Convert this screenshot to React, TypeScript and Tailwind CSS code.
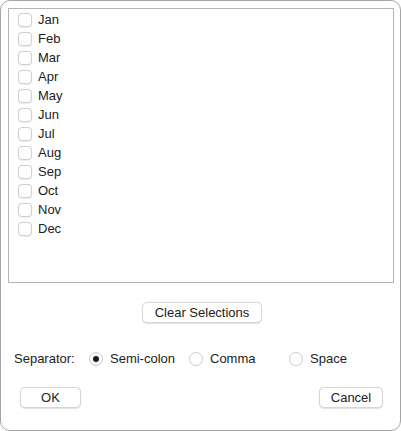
import React, { useState } from "react";

const MONTHS = ["Jan", "Feb", "Mar", "Apr", "May", "Jun", "Jul", "Aug", "Sep", "Oct", "Nov", "Dec"];

const SEPARATORS = [
  { value: "semicolon", label: "Semi-colon" },
  { value: "comma", label: "Comma" },
  { value: "space", label: "Space" },
];

const btn =
  "h-[21px] rounded-[5px] bg-white border border-[#d6d6d6] shadow-[0_0.5px_1px_rgba(0,0,0,0.12)] text-[13px] text-[#222] flex items-center justify-center";

export default function App() {
  const [checked, setChecked] = useState<string[]>([]);
  const [sep, setSep] = useState("semicolon");

  const toggle = (m: string) =>
    setChecked((c) => (c.includes(m) ? c.filter((x) => x !== m) : [...c, m]));

  return (
    <div
      className="w-[401px] h-[431px] bg-white border border-[#a6a6a6] rounded-[10px] flex flex-col text-[13px] text-[#222] overflow-hidden"
      style={{ fontFamily: '"Liberation Sans", Arial, sans-serif' }}
    >
      {/* Month list */}
      <div className="ml-[7px] mt-[7px] w-[386px] h-[275px] border border-[#b4b4b4] pt-[1px]">
        {MONTHS.map((m) => {
          const on = checked.includes(m);
          return (
            <div key={m} className="h-[19px] flex items-center pl-[9px] cursor-default" onClick={() => toggle(m)}>
              <span className="w-[14px] h-[14px] rounded-[4px] border border-[#cfcfcf] bg-white shadow-[0_0.5px_1px_rgba(0,0,0,0.08)] flex items-center justify-center">
                {on && (
                  <svg width="10" height="10" viewBox="0 0 10 10">
                    <path d="M2 5.2 4.2 7.4 8 2.6" fill="none" stroke="#222" strokeWidth="1.6" />
                  </svg>
                )}
              </span>
              <span className="ml-[6px]">{m}</span>
            </div>
          );
        })}
      </div>

      {/* Clear */}
      <div className="flex justify-center mt-[19px] pl-[3px]">
        <button className={`${btn} w-[120px]`} onClick={() => setChecked([])}>
          Clear Selections
        </button>
      </div>

      {/* Separator */}
      <div className="flex items-center mt-[26px] h-[20px] pl-[13px]">
        <span className="w-[75px]">Separator:</span>
        {SEPARATORS.map((s) => (
          <label key={s.value} className="w-[100px] flex items-center" onClick={() => setSep(s.value)}>
            <span className="w-[14px] h-[14px] rounded-full border border-[#cfcfcf] bg-white shadow-[0_0.5px_1px_rgba(0,0,0,0.08)] flex items-center justify-center">
              {sep === s.value && <span className="w-[6px] h-[6px] rounded-full bg-[#1a1a1a]" />}
            </span>
            <span className="ml-[7px]">{s.label}</span>
          </label>
        ))}
      </div>

      {/* Footer */}
      <div className="flex justify-between mt-[18px] pl-[19px] pr-[17px]">
        <button className={`${btn} w-[61px]`}>OK</button>
        <button className={`${btn} w-[64px]`}>Cancel</button>
      </div>
    </div>
  );
}
